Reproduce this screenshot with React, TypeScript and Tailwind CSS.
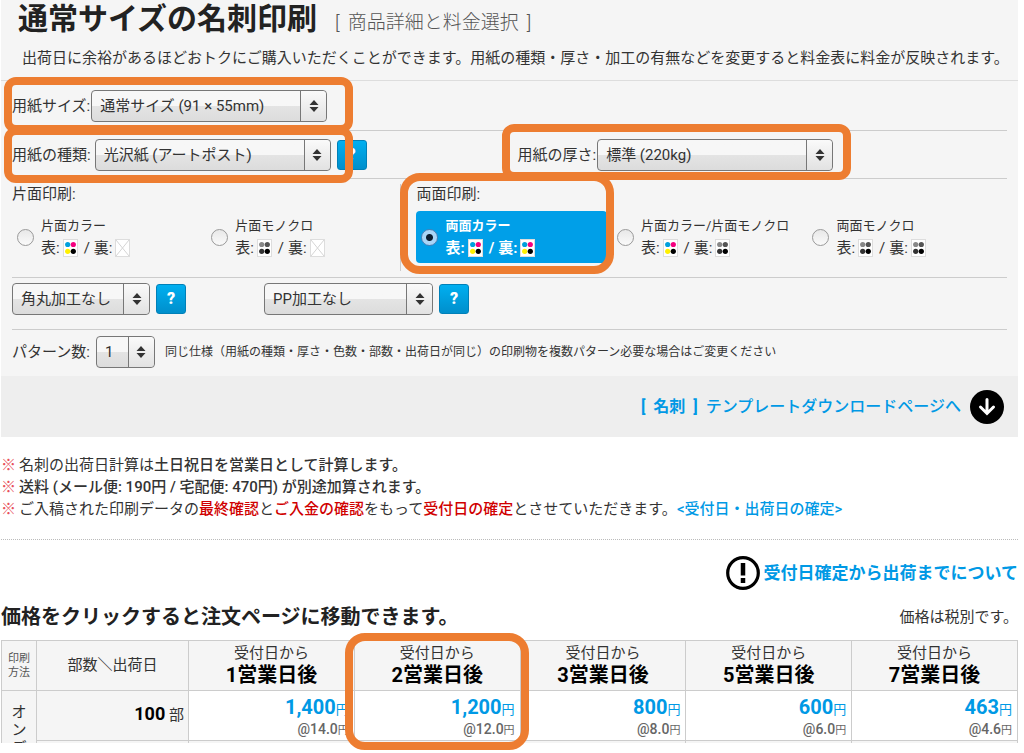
import React from 'react';

const prices = [
  { days: '1', price: '1,400', unit: '14.0' },
  { days: '2', price: '1,200', unit: '12.0' },
  { days: '3', price: '800', unit: '8.0' },
  { days: '5', price: '600', unit: '6.0' },
  { days: '7', price: '463', unit: '4.6' },
];

const Highlight = ({ className }: { className: string }) => (
  <div className={`absolute z-10 border-8 border-[#ed7d31] pointer-events-none ${className}`} />
);

const SelectBox = ({ id, label, value, className }: { id: string; label?: string; value: string; className: string }) => (
  <div className={`relative h-8 shrink-0 ${className}`}>
    <select
      id={id}
      aria-label={label}
      defaultValue={value}
      className="appearance-none w-full h-full pl-2 pr-7 rounded border border-[#777] bg-linear-to-b from-[#f7f7f7] from-50% via-[#e4e4e4] via-50% to-[#dcdcdc] text-[15px] text-[#333]"
    >
      <option>{value}</option>
    </select>
    <span className="absolute right-px inset-y-px w-[26px] rounded-r border-l border-[#777] bg-linear-to-b from-[#fafafa] to-[#e2e2e2] flex items-center justify-center pointer-events-none">
      <svg width="10" height="12" viewBox="0 0 10 12" fill="#333">
        <path d="M5 0 9.5 5H.5zM5 12 .5 7h9z" />
      </svg>
    </span>
  </div>
);

const HelpButton = () => (
  <button
    type="button"
    className="w-[30px] h-[30px] shrink-0 rounded-[3px] border border-[#0080b8] bg-linear-to-b from-[#00aff0] to-[#008fcc] text-white text-base leading-none font-black"
  >
    ?
  </button>
);

const colorDots = ['#00a0dc', '#f5007f', '#fff000', '#000'];
const monoDots = ['#888', '#555', '#333', '#000'];

type InkType = 'color' | 'mono' | 'none';

const Ink = ({ type }: { type: InkType }) => {
  const dots = type === 'color' ? colorDots : monoDots;
  return (
    <svg width="15" height="18" viewBox="0 0 15 18" className="ml-[3px] shrink-0">
      <rect x=".5" y=".5" width="14" height="17" fill="#fff" stroke="#ddd" />
      {type === 'none' ? (
        <path d="M1 1 14 17M14 1 1 17" stroke="#d5d5d5" />
      ) : (
        dots.map((c, i) => <circle key={c} cx={i % 2 ? 10.3 : 4.7} cy={i < 2 ? 5.5 : 12.3} r="2.6" fill={c} />)
      )}
    </svg>
  );
};

const PrintOption = ({ name, front, back, checked }: { name: string; front: InkType; back: InkType; checked?: boolean }) => (
  <label className={`flex items-center gap-[7px] py-1 pl-[5px] rounded mr-[5px] ${checked ? 'bg-[#009fe8] text-white font-bold' : ''}`}>
    <input
      type="radio"
      name="print"
      defaultChecked={checked}
      className="appearance-none w-[17px] h-[17px] shrink-0 rounded-full border border-[#999] bg-linear-to-b from-[#e8e8e8] to-[#fafafa] checked:border-[#4a7fb5] checked:bg-[radial-gradient(circle,#0a1c30_3px,#a9d5f7_4px)]"
    />
    <span className="whitespace-nowrap">
      <span className="block text-[13px] leading-[22px]">{name}</span>
      <span className="flex items-center text-[15px] leading-[22px]">
        表:<Ink type={front} />
        <span className="ml-[6px] mr-1">/</span>
        裏:<Ink type={back} />
      </span>
    </span>
  </label>
);

const Notes = () => (
  <ul className="mt-[17px] pb-[19px] border-b border-dotted border-[#bbb] text-[15px] leading-[22px] whitespace-nowrap">
    <li className="flex gap-[3px]">
      <span className="text-[#e8505b]">※</span>
      <span>名刺の出荷日計算は<b className="font-medium">土日祝日を営業日として計算します。</b></span>
    </li>
    <li className="flex gap-[3px]">
      <span className="text-[#e8505b]">※</span>
      <b className="font-medium">送料 (メール便: 190円 / 宅配便: 470円) が別途加算されます。</b>
    </li>
    <li className="flex gap-[3px]">
      <span className="text-[#e8505b]">※</span>
      <span>
        ご入稿された印刷データの<b className="font-medium text-[#d00000]">最終確認</b>と
        <b className="font-medium text-[#d00000]">ご入金の確認</b>をもって
        <b className="font-medium text-[#d00000]">受付日の確定</b>とさせていただきます。
        <a href="#" className="font-medium text-[#0099e5]">&lt;受付日・出荷日の確定&gt;</a>
      </span>
    </li>
  </ul>
);

const PriceTable = () => (
  <div className="relative mt-2">
    <div className="h-[103px] overflow-hidden">
      <table className="w-full table-fixed border-collapse [&_th]:border [&_td]:border [&_th]:border-[#ccc] [&_td]:border-[#ccc]">
        <colgroup>
          <col className="w-[35px]" />
          <col className="w-[152px]" />
          <col span={5} />
        </colgroup>
        <thead>
          <tr className="h-[50px] bg-[#f5f5f5]">
            <th className="text-[11px] leading-[14px] font-normal text-[#555]">印刷<br />方法</th>
            <th className="text-[15px] font-normal">部数＼出荷日</th>
            {prices.map((p) => (
              <th key={p.days} className="pb-1 font-normal">
                <span className="block text-[15px] leading-[22px]">受付日から</span>
                <span className="block text-xl leading-[22px] font-bold text-black">{p.days}営業日後</span>
              </th>
            ))}
          </tr>
        </thead>
        <tbody>
          <tr className="h-[50px]">
            <th rowSpan={2} className="bg-[#f5f5f5] align-top pt-3 text-[15px] leading-[18px] font-normal">オ<br />ン<br />デ</th>
            <th className="bg-[#f5f5f5] pr-1 pb-1 text-right text-[15px] font-normal">
              <b className="text-lg font-bold text-black">100</b> 部
            </th>
            {prices.map((p) => (
              <td key={p.days} className="pt-1 pr-[5px] text-right">
                <a href="#" className="block text-[13px] leading-[22px] text-[#0099e5]">
                  <b className="text-xl leading-[22px] font-bold">{p.price}</b>円
                </a>
                <span className="block text-[11px] leading-4 text-[#666]">
                  <b className="text-sm leading-4 font-medium">@{p.unit}</b>円
                </span>
              </td>
            ))}
          </tr>
          <tr className="h-[50px] bg-[#f5f5f5]">
            <th />
            {prices.map((p) => (
              <td key={p.days} />
            ))}
          </tr>
        </tbody>
      </table>
    </div>
    <Highlight className="left-[344px] -top-[7px] w-[184px] h-[117px] rounded-[20px]" />
  </div>
);

export default function App() {
  return (
    <main className="ml-px mr-[6px] pb-[10px] font-[Roboto,'Noto_Sans_CJK_JP',sans-serif] text-[#333]">
      <form className="bg-[#f5f5f5]">
        <header className="pl-[17px] pb-3 border-b border-[#ddd]">
          <h1 className="flex items-baseline gap-[18px] text-[30px] leading-[38px] font-bold text-[#222] whitespace-nowrap">
            通常サイズの名刺印刷
            <small className="text-[19px] font-light text-[#555]">
              [<span className="mx-2">商品詳細と料金選択</span>]
            </small>
          </h1>
          <p className="mt-[6px] pl-1 text-[15px] leading-5 whitespace-nowrap">
            出荷日に余裕があるほどおトクにご購入いただくことができます。用紙の種類・厚さ・加工の有無などを変更すると料金表に料金が反映されます。
          </p>
        </header>

        <div className="mx-[11px] text-[15px] leading-5">
          <div className="relative flex items-center h-[50px] border-b border-[#ccc]">
            <label htmlFor="size">用紙サイズ:</label>
            <SelectBox id="size" value="通常サイズ (91 × 55mm)" className="w-[236px] ml-px" />
            <Highlight className="-left-2 -top-1 w-[349px] h-[56px] rounded-xl" />
          </div>

          <div className="grid grid-cols-[505fr_489fr] h-12 border-b border-[#ccc]">
            <div className="relative flex items-center">
              <label htmlFor="paper">用紙の種類:</label>
              <SelectBox id="paper" value="光沢紙 (アートポスト)" className="w-[236px] ml-1 mr-[6px]" />
              <HelpButton />
              <Highlight className="-left-2 -top-1 w-[349px] h-[56px] rounded-xl" />
            </div>
            <div className="relative flex items-center">
              <label htmlFor="thickness">用紙の厚さ:</label>
              <SelectBox id="thickness" value="標準 (220kg)" className="w-[236px] ml-px" />
              <Highlight className="-left-4 -top-[7px] w-[349px] h-[56px] rounded-xl" />
            </div>
          </div>

          <div className="grid grid-cols-[389fr_605fr] pt-[5px] pb-[6px] border-b border-[#ccc]">
            <fieldset className="border-r border-[#ccc] pb-2">
              <legend className="float-left w-full mb-[7px]">片面印刷:</legend>
              <div className="clear-both grid grid-cols-2">
                <PrintOption name="片面カラー" front="color" back="none" />
                <PrintOption name="片面モノクロ" front="mono" back="none" />
              </div>
            </fieldset>
            <fieldset className="relative pl-[15px] pr-1 pb-2">
              <legend className="float-left w-full mb-[7px]">両面印刷:</legend>
              <div className="clear-both grid grid-cols-3">
                <PrintOption name="両面カラー" front="color" back="color" checked />
                <PrintOption name="片面カラー/片面モノクロ" front="color" back="mono" />
                <PrintOption name="両面モノクロ" front="mono" back="mono" />
              </div>
              <Highlight className="-left-px -top-[11px] w-[214px] h-[101px] rounded-[20px]" />
            </fieldset>
          </div>

          <div className="flex items-center pt-[5px] pb-[14px] border-b border-[#ccc]">
            <SelectBox id="corner" label="角丸加工" value="角丸加工なし" className="w-[138px] mr-[6px]" />
            <HelpButton />
            <SelectBox id="pp" label="PP加工" value="PP加工なし" className="w-[169px] ml-[78px] mr-[6px]" />
            <HelpButton />
          </div>

          <div className="flex items-center pt-[6px] pb-2">
            <label htmlFor="pattern">パターン数:</label>
            <SelectBox id="pattern" value="1" className="w-[59px] ml-[6px] mr-[10px]" />
            <span className="text-xs whitespace-nowrap">
              同じ仕様（用紙の種類・厚さ・色数・部数・出荷日が同じ）の印刷物を複数パターン必要な場合はご変更ください
            </span>
          </div>
        </div>

        <div className="flex justify-end items-center h-[61px] pr-[14px] bg-[#eee]">
          <a href="#" className="flex items-center text-base font-bold text-[#0099e5]">
            [<span className="mx-2">名刺</span>]
            <span className="ml-2 mr-[9px] font-medium">テンプレートダウンロードページへ</span>
            <svg width="34" height="34" viewBox="0 0 34 34">
              <circle cx="17" cy="17" r="17" fill="#000" />
              <path d="M17 9.500v13M10.500 17l6.500 6.500 6.500-6.500" fill="none" stroke="#fff" strokeWidth="3" strokeLinecap="round" />
            </svg>
          </a>
        </div>
      </form>

      <Notes />

      <div className="flex justify-end mt-4">
        <a href="#" className="flex items-center gap-1 text-[17px] leading-[34px] font-bold text-[#0099e5]">
          <svg width="34" height="34" viewBox="0 0 34 34">
            <circle cx="17" cy="17" r="15.3" fill="none" stroke="#000" strokeWidth="3.2" />
            <path d="M17 7v12.500M17 22v5" stroke="#000" strokeWidth="4.500" />
          </svg>
          受付日確定から出荷までについて
        </a>
      </div>

      <div className="flex items-center justify-between mt-3 leading-[30px]">
        <h2 className="text-xl leading-[30px] font-bold text-[#222]">価格をクリックすると注文ページに移動できます。</h2>
        <span className="text-[15px]">価格は税別です。</span>
      </div>
      <PriceTable />
    </main>
  );
}
